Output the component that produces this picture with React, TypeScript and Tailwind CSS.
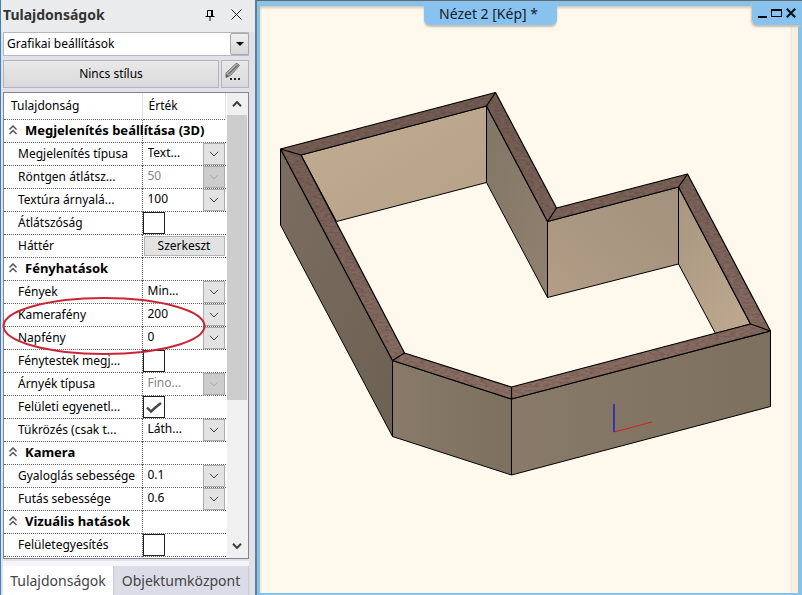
import React from 'react';

type Kind = 'section' | 'select' | 'check' | 'button';

interface Row {
  id: string;
  kind: Kind;
  label: string;
  value?: string;
  disabled?: boolean;
  checked?: boolean;
}

const rows: Row[] = [
  { id: 'display', kind: 'section', label: 'Megjelenítés beállítása (3D)' },
  { id: 'display-type', kind: 'select', label: 'Megjelenítés típusa', value: 'Text...' },
  { id: 'xray', kind: 'select', label: 'Röntgen átlátsz...', value: '50', disabled: true },
  { id: 'texture', kind: 'select', label: 'Textúra árnyalá...', value: '100' },
  { id: 'transparency', kind: 'check', label: 'Átlátszóság' },
  { id: 'background', kind: 'button', label: 'Háttér', value: 'Szerkeszt' },
  { id: 'lighting', kind: 'section', label: 'Fényhatások' },
  { id: 'lights', kind: 'select', label: 'Fények', value: 'Min...' },
  { id: 'camera-light', kind: 'select', label: 'Kamerafény', value: '200' },
  { id: 'sun-light', kind: 'select', label: 'Napfény', value: '0' },
  { id: 'light-bodies', kind: 'check', label: 'Fénytestek megj...' },
  { id: 'shadow', kind: 'select', label: 'Árnyék típusa', value: 'Fino...', disabled: true },
  { id: 'bump', kind: 'check', label: 'Felületi egyenetl...', checked: true },
  { id: 'mirror', kind: 'select', label: 'Tükrözés (csak t...', value: 'Láth...' },
  { id: 'camera', kind: 'section', label: 'Kamera' },
  { id: 'walk', kind: 'select', label: 'Gyaloglás sebessége', value: '0.1' },
  { id: 'run', kind: 'select', label: 'Futás sebessége', value: '0.6' },
  { id: 'visual', kind: 'section', label: 'Vizuális hatások' },
  { id: 'merge', kind: 'check', label: 'Felületegyesítés' },
];

function Chevron({ up = false, className = '' }: { up?: boolean; className?: string }) {
  return (
    <svg viewBox="0 0 10 6" className={className} fill="none" stroke="currentColor" aria-hidden="true">
      <path d={up ? 'M1 5.2 5 1l4 4.2' : 'M1 .8 5 5l4-4.2'} />
    </svg>
  );
}

function ValueSelect({ row }: { row: Row }) {
  return (
    <div className="relative h-[22px]">
      <select
        id={row.id}
        disabled={row.disabled}
        className="block h-[21px] w-full appearance-none bg-white pl-[5px] text-[12px] leading-5 text-black opacity-100 outline-none disabled:text-[#858585]"
      >
        <option>{row.value}</option>
      </select>
      <span
        className={`pointer-events-none absolute top-0 right-px flex h-[22px] w-[22px] items-center justify-center border border-[#adadad] ${
          row.disabled ? 'bg-[#cccccc] text-[#aaaaaa]' : 'bg-[#e3e3e3] text-[#404040]'
        }`}
      >
        <Chevron className="h-[6px] w-[10px]" />
      </span>
    </div>
  );
}

function ValueCheck({ row }: { row: Row }) {
  return (
    <div className="relative h-[22px] w-[22px]">
      <input
        id={row.id}
        type="checkbox"
        defaultChecked={row.checked}
        className="peer block h-[22px] w-[22px] appearance-none border border-[#222] bg-white"
      />
      <svg
        viewBox="0 0 22 22"
        className="pointer-events-none absolute inset-0 hidden h-[22px] w-[22px] peer-checked:block"
        fill="none"
        stroke="#484848"
        strokeWidth="2.400"
        aria-hidden="true"
      >
        <path d="M4 11.500l4 4L13 11l5-4" />
      </svg>
    </div>
  );
}

function PropertyRow({ row }: { row: Row }) {
  if (row.kind === 'section') {
    return (
      <tr className="h-[23px] border-b border-dotted border-[#666]">
        <th scope="rowgroup" className="border-r border-dotted border-[#666] p-0 text-left whitespace-nowrap">
          <button type="button" className="flex h-[22px] items-center gap-[7px] pb-[2px] pl-1 text-[13px] leading-5 font-bold">
            <svg viewBox="0 0 10 10" className="h-[10px] w-[10px]" fill="none" stroke="#555" strokeWidth="1.500" aria-hidden="true">
              <path d="M1.500 4.500 5 1l3.500 3.500M1.500 9 5 5.500 8.500 9" />
            </svg>
            {row.label}
          </button>
        </th>
        <td />
      </tr>
    );
  }
  return (
    <tr className="h-[23px] border-b border-dotted border-[#666]">
      <th scope="row" className="border-r border-dotted border-[#666] p-0 text-left font-normal whitespace-nowrap">
        <label htmlFor={row.id} className="block h-[22px] pl-[14px] leading-[22px]">
          {row.label}
        </label>
      </th>
      <td className="p-0">
        {row.kind === 'select' && <ValueSelect row={row} />}
        {row.kind === 'check' && <ValueCheck row={row} />}
        {row.kind === 'button' && (
          <button
            id={row.id}
            type="button"
            className="mx-px block h-5 w-[81px] border border-[#b4b4b4] bg-[#e2e2e2] text-[12px] leading-4"
          >
            {row.value}
          </button>
        )}
      </td>
    </tr>
  );
}

function PropertiesPanel() {
  return (
    <aside className="flex w-[255px] shrink-0 flex-col border-l border-[#3d80bd] bg-[#e1e1e9] pr-[6px] pl-[2px] text-[12px] text-black">
      <header className="-mr-[6px] -ml-[2px] flex h-8 items-center bg-[#e9ebed] pr-[13px] pb-[3px] pl-[2px]">
        <h1 className="flex-1 text-[14px] font-bold text-[#333]">Tulajdonságok</h1>
        <button type="button" aria-label="Rögzítés" className="mr-4">
          <svg viewBox="0 0 10 12" className="h-3 w-[10px]" fill="none" stroke="#000" aria-hidden="true">
            <path d="M2.500 7V1.500H7.500V7M.5 7.500h9M5 8v4" />
            <path d="M7 1v6" strokeWidth="2" />
          </svg>
        </button>
        <button type="button" aria-label="Bezárás">
          <svg viewBox="0 0 11 11" className="h-[11px] w-[11px]" fill="none" stroke="#222" aria-hidden="true">
            <path d="m.5.5 10 10M10.500.5l-10 10" />
          </svg>
        </button>
      </header>

      <div className="relative">
        <select
          aria-label="Kategória"
          className="block h-6 w-full appearance-none border border-[#b6b6be] bg-white pl-[3px] text-[12px] outline-none"
        >
          <option>Grafikai beállítások</option>
        </select>
        <span className="pointer-events-none absolute top-px right-0 flex h-[22px] w-[19px] items-center justify-center rounded-xs border border-[#a9a9ad] bg-linear-to-b from-[#f1f1f1] to-[#d7d7d7]">
          <svg viewBox="0 0 8 4" className="h-1 w-2" aria-hidden="true">
            <path d="M0 0h8L4 4z" />
          </svg>
        </span>
      </div>

      <div className="mt-1 flex h-7 gap-[2px]">
        <button
          type="button"
          className="flex-1 border border-[#b3b3b9] bg-linear-to-b from-[#e9e9ea] to-[#d9d9db]"
        >
          Nincs stílus
        </button>
        <button
          type="button"
          aria-label="Stílus szerkesztése"
          className="flex w-7 items-start justify-start border border-[#b3b3b9] bg-linear-to-b from-[#e9e9ea] to-[#d9d9db] pt-px pl-[3px]"
        >
          <svg viewBox="0 0 18 20" className="h-5 w-[18px]" fill="none" aria-hidden="true">
            <path d="M1 11 11 1.500Q13 1 14.500 3.500L6 13 1 15.500z" fill="#b5b5b5" stroke="#777" />
            <path d="M3.500 12 13 3" stroke="#6b6b6b" strokeWidth="1.500" />
            <path d="M1 15.500l.5-3.500 2.500 2z" fill="#555" />
            <path d="M5 16h2v2H5zM9 16h2v2H9zM13 16h2v2h-2z" fill="#222" />
          </svg>
        </button>
      </div>

      <section className="relative mt-1 flex border border-[#85858f] bg-white">
        <div className="min-w-0 flex-1 pb-px">
          <table className="w-full table-fixed border-collapse">
            <colgroup>
              <col className="w-[138px]" />
              <col />
            </colgroup>
            <thead>
              <tr className="h-[26px] border-b border-dotted border-[#666]">
                <th scope="col" className="border-r border-[#e3e3e3] p-0 pl-[7px] text-left font-normal">Tulajdonság</th>
                <th scope="col" className="border-r border-[#e3e3e3] p-0 pl-[6px] text-left font-normal">Érték</th>
              </tr>
            </thead>
            <tbody>
              {rows.map((row) => (
                <PropertyRow key={row.id} row={row} />
              ))}
            </tbody>
          </table>
        </div>
        <div className="flex w-[22px] shrink-0 flex-col border-l border-white bg-[#f0f0f0] pr-px text-[#404040]">
          <button type="button" aria-label="Fel" className="flex h-[22px] items-center justify-center">
            <Chevron up className="h-[6px] w-[10px] stroke-2" />
          </button>
          <div className="flex-1">
            <div className="h-[68%] bg-[#cdcdcd]" />
          </div>
          <button type="button" aria-label="Le" className="flex h-6 items-center justify-center">
            <Chevron className="h-[6px] w-[10px] stroke-2" />
          </button>
        </div>
        <svg
          viewBox="0 0 204 60"
          className="pointer-events-none absolute top-[203px] -left-[2px] h-[60px] w-[204px]"
          fill="none"
          stroke="#cb2535"
          strokeWidth="2"
          aria-hidden="true"
        >
          <ellipse cx="102" cy="30" rx="100.500" ry="28" />
        </svg>
      </section>

      <nav className="mt-[2px] flex flex-1 items-stretch border-t-[5px] border-[#f6f6f9] text-[14px] text-[#444]" role="tablist">
        <button type="button" role="tab" aria-selected="true" className="w-[110px] shrink-0 bg-white whitespace-nowrap">
          Tulajdonságok
        </button>
        <button
          type="button"
          role="tab"
          aria-selected="false"
          className="flex-1 border-x border-[#c9c9d4] bg-[#dcdce8] whitespace-nowrap"
        >
          Objektumközpont
        </button>
      </nav>
    </aside>
  );
}

function WallModel() {
  return (
    <svg viewBox="260 6 538 587" className="block h-full w-full" role="img" aria-label="3D falmodell">
      <defs>
        <linearGradient id="back" x1="0" y1="0" x2="1" y2="1">
          <stop offset="0" stopColor="#c2ad94" />
          <stop offset="1" stopColor="#b5a088" />
        </linearGradient>
        <linearGradient id="mid" x1="0" y1="0" x2="1" y2="1">
          <stop offset="0" stopColor="#837666" />
          <stop offset="1" stopColor="#90806f" />
        </linearGradient>
        <linearGradient id="second" x1="0" y1="1" x2="1" y2="0">
          <stop offset="0" stopColor="#b29d86" />
          <stop offset="1" stopColor="#a2917c" />
        </linearGradient>
        <linearGradient id="right" x1="0" y1="0" x2="0.700" y2="1">
          <stop offset="0" stopColor="#a89680" />
          <stop offset="1" stopColor="#bca78e" />
        </linearGradient>
        <linearGradient id="left" x1="0" y1="0" x2="1" y2="1">
          <stop offset="0" stopColor="#7b6e60" />
          <stop offset="1" stopColor="#6d6154" />
        </linearGradient>
        <linearGradient id="front" x1="0" y1="0" x2="1" y2="0">
          <stop offset="0" stopColor="#897a69" />
          <stop offset="1" stopColor="#7c705f" />
        </linearGradient>
        <linearGradient id="top" x1="0" y1="0" x2="0" y2="1">
          <stop offset="0" stopColor="#725c52" />
          <stop offset="1" stopColor="#8c7065" />
        </linearGradient>
        <filter id="grain" x="0" y="0" width="1" height="1" colorInterpolationFilters="sRGB">
          <feTurbulence type="fractalNoise" baseFrequency="0.2 0.5" numOctaves="2" seed="4" result="n" />
          <feColorMatrix in="n" values="0 0 0 0 0.28  0 0 0 0 0.2  0 0 0 0 0.18  0.8 0 0 0 -0.300" result="dark" />
          <feComposite in="dark" in2="SourceGraphic" operator="in" result="inside" />
          <feMerge>
            <feMergeNode in="SourceGraphic" />
            <feMergeNode in="inside" />
          </feMerge>
        </filter>
      </defs>
      <g stroke="#000" strokeLinejoin="round">
        <path d="M301 155 486.500 106V182.500L336.500 221.500z" fill="url(#back)" />
        <path d="M486.500 106 547.500 221.500V297.500L486.500 182.500z" fill="url(#mid)" />
        <path d="M547.500 221.500 678.500 187V264L547.500 297.500z" fill="url(#second)" />
        <path d="M678.500 187 750.500 324 715.500 333.500 678.500 264z" fill="url(#right)" />
        <path d="M280.500 149 392.500 360.500V436.500L280.500 225z" fill="url(#left)" />
        <path d="M392.500 360.500 511.500 399V475L392.500 436.500z" fill="url(#front)" />
        <path d="M511.500 399 770.500 331V406.500L511.500 475z" fill="url(#front)" />
      </g>
      <path
        filter="url(#grain)"
        fill="url(#top)"
        fillRule="evenodd"
        d="M280.500 149 495.500 92.500 556.500 208 687.500 174 770.500 331 511.500 399 392.500 360.500zM301 155 404.500 353 511.500 387 750.500 324 678.500 187 547.500 221.500 486.500 106z"
      />
      <g fill="none" stroke="#000" strokeWidth="1.200" strokeLinejoin="round">
        <path d="M280.500 149 495.500 92.500 556.500 208 687.500 174 770.500 331 511.500 399 392.500 360.500z" />
        <path d="M301 155 404.500 353 511.500 387 750.500 324 678.500 187 547.500 221.500 486.500 106z" />
        <path d="M280.500 149 301 155M495.500 92.500l-9 13.500M556.500 208l-9 13.500M687.500 174l-9 13M770.500 331l-20-7M511.500 399v-12M392.500 360.500l12-7.500" />
      </g>
      <path d="M614 432 652 422" stroke="#d81e1e" fill="none" />
      <path d="M614 404v28" stroke="#3a32a8" strokeWidth="2" fill="none" />
    </svg>
  );
}

function Viewport() {
  return (
    <main className="relative flex min-w-0 flex-1 flex-col border-t border-l-2 border-t-[#66686c] border-l-[#627d94] bg-[#87c3e8] pt-[5px] pr-1 pb-[2px] pl-[3px]">
      <div className="min-h-0 flex-1 border-r-[6px] border-[#f8f0df] bg-[#fff8ec] shadow-[inset_0_2px_3px_#cfc9bd]">
        <div className="-mr-[6px] h-full">
          <WallModel />
        </div>
      </div>
      <h2 className="absolute top-0 left-[167px] h-6 w-[133px] rounded-b-md bg-[#87c3ee] pr-1 text-center text-[14px] leading-[25px] text-[#12202c] shadow-[0_2px_2px_#c5c0b5]">
        Nézet 2 [Kép] *
      </h2>
      <div className="absolute top-0 right-0 flex h-6 w-[50px] items-center justify-end gap-1 rounded-bl-md bg-[#87c3ee] pr-[6px] text-[#0b151c] shadow-[-1px_2px_2px_#c5c0b5]">
        <button type="button" aria-label="Kis méret">
          <svg viewBox="0 0 9 10" className="h-[10px] w-[9px]" aria-hidden="true">
            <path d="M0 8h9v2H0z" />
          </svg>
        </button>
        <button type="button" aria-label="Teljes méret">
          <svg viewBox="0 0 11 10" className="h-[10px] w-[11px]" aria-hidden="true">
            <path d="M0 1h11v8H0zM1 3v5h9V3z" fillRule="evenodd" />
          </svg>
        </button>
        <button type="button" aria-label="Nézet bezárása">
          <svg viewBox="0 0 10 10" className="h-[10px] w-[10px]" fill="none" stroke="currentColor" strokeWidth="2.200" aria-hidden="true">
            <path d="m.8.8 8.400 8.400M9.200.8.8 9.200" />
          </svg>
        </button>
      </div>
    </main>
  );
}

export default function App() {
  return (
    <div className="flex h-screen min-h-[595px] overflow-hidden font-['Noto_Sans','Open_Sans',sans-serif]">
      <PropertiesPanel />
      <Viewport />
    </div>
  );
}
